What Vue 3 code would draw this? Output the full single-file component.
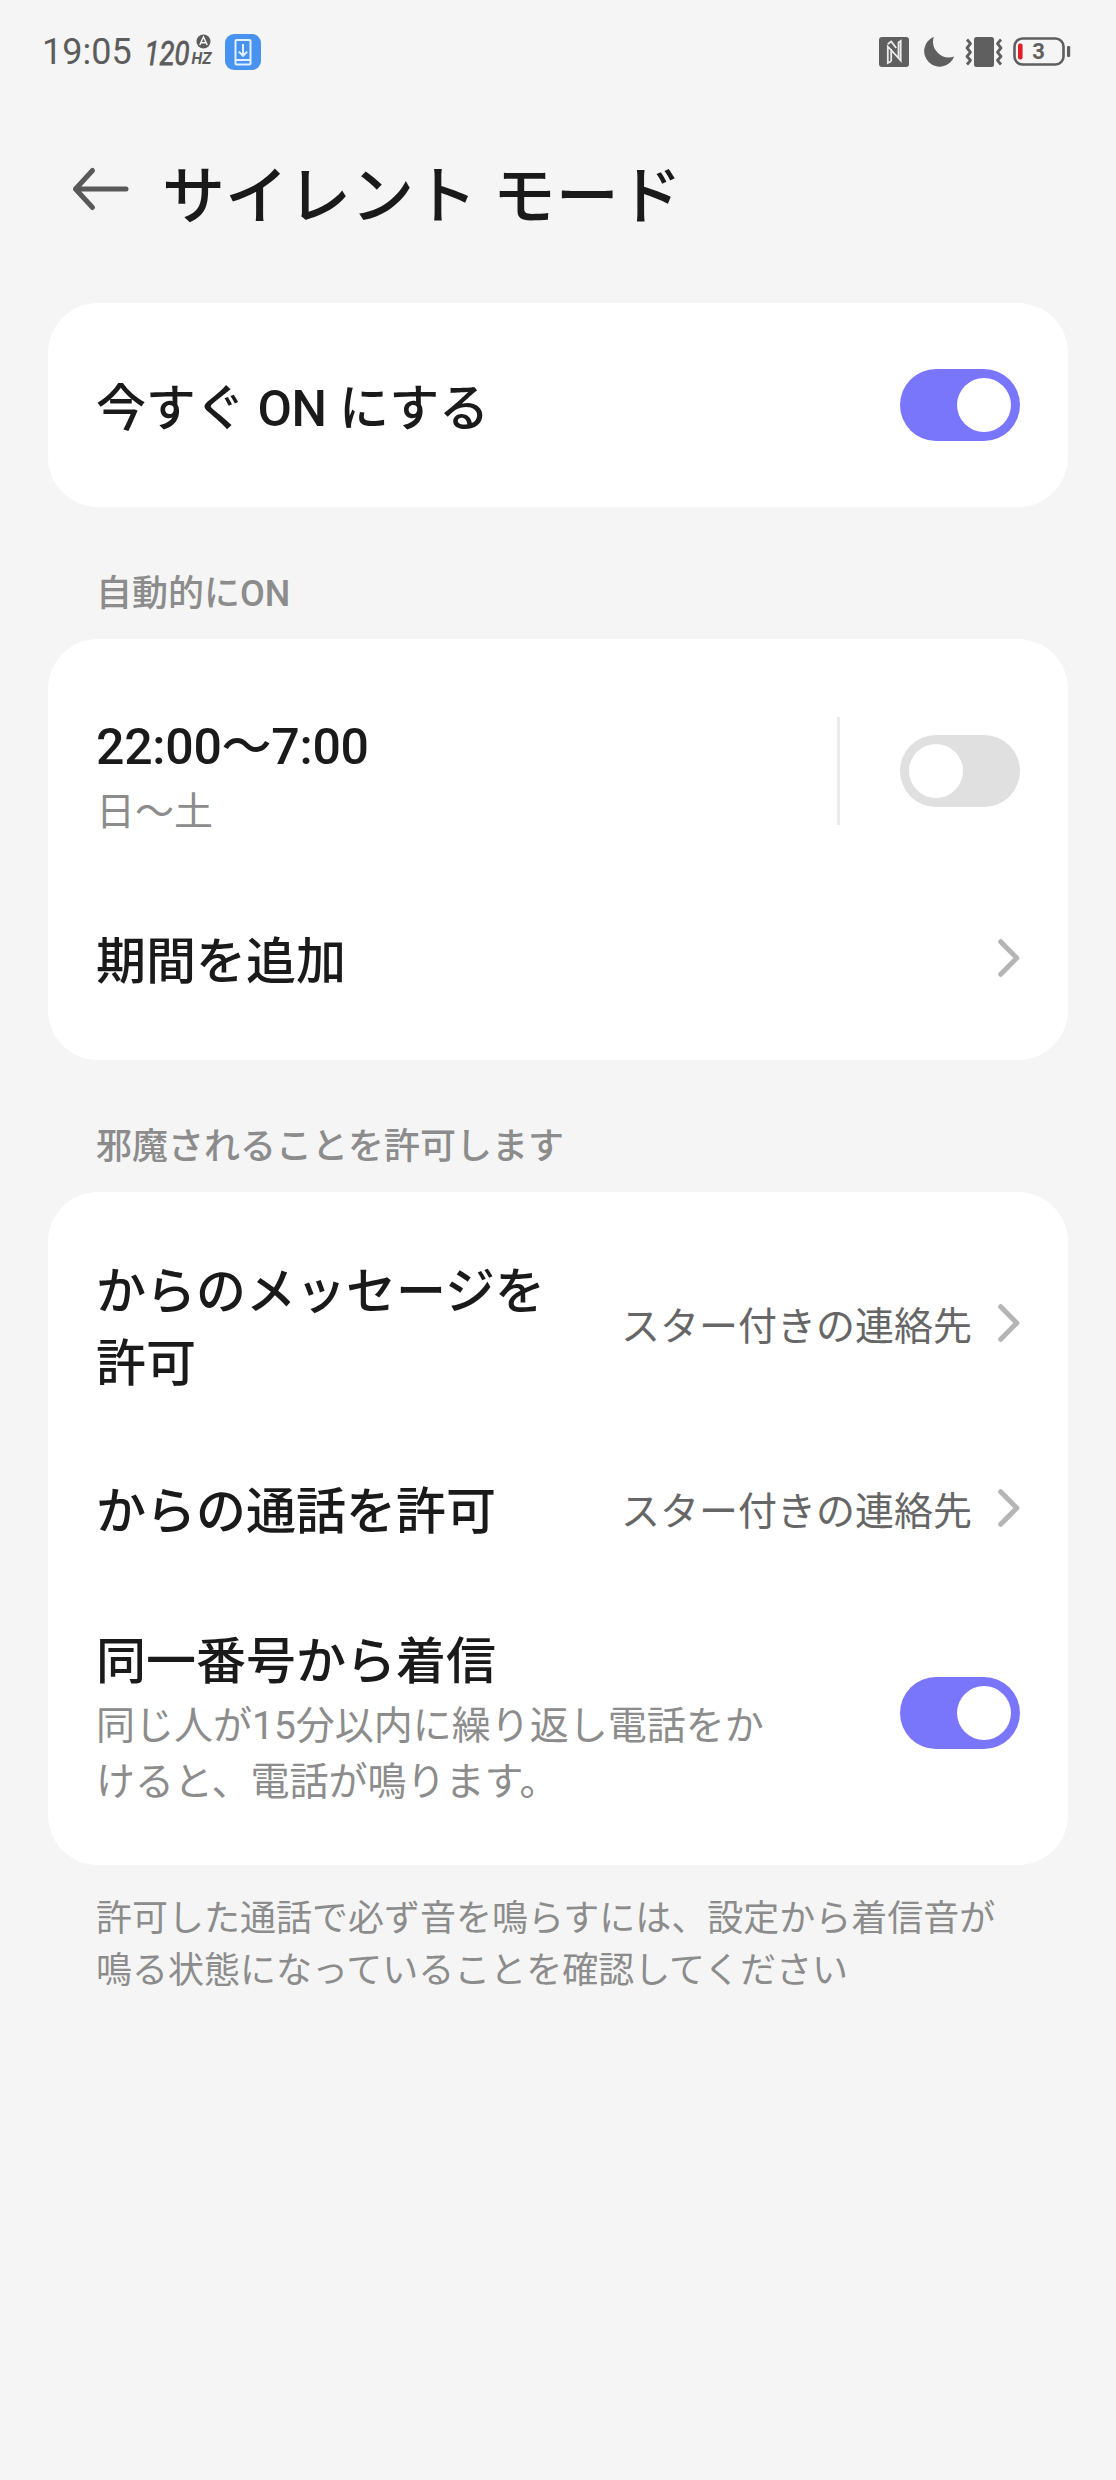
<script setup>
import { ref } from 'vue'

const groups = ref([
  {
    kind: 'single',
    label: '',
    rows: [{ title: '今すぐ ON にする', toggle: true, on: true }],
  },
  {
    kind: 'schedule',
    label: '自動的にON',
    rows: [
      { title: '22:00〜7:00', sub: '日〜土', divider: true, toggle: true, on: false },
      { title: '期間を追加', link: true },
    ],
  },
  {
    kind: 'allow',
    label: '邪魔されることを許可します',
    rows: [
      { title: 'からのメッセージを\n許可', value: 'スター付きの連絡先', link: true },
      { title: 'からの通話を許可', value: 'スター付きの連絡先', link: true },
      {
        title: '同一番号から着信',
        sub: '同じ人が15分以内に繰り返し電話をか\nけると、電話が鳴ります。',
        toggle: true,
        on: true,
      },
    ],
  },
])
</script>

<template>
  <div class="screen">
    <header class="status">
      <div class="status-left">
        <span class="clock">19:05</span>
        <svg class="hz" width="68" height="40" viewBox="0 0 68 40">
          <text class="hz-num" x="-0.5" y="32.5" textLength="45" lengthAdjust="spacingAndGlyphs">120</text>
          <text class="hz-unit" x="46.5" y="32" textLength="20" lengthAdjust="spacingAndGlyphs">HZ</text>
          <circle cx="58.5" cy="9.5" r="7" fill="#5c5c5c" />
          <path d="M54.8 13l3.7-8 3.7 8M56.2 10.8h4.6" fill="none" stroke="#f5f5f5" stroke-width="1.5" />
        </svg>
        <svg class="app-badge" width="36" height="36" viewBox="0 0 36 36">
          <rect width="36" height="36" rx="9" fill="#4892f0" />
          <g fill="none" stroke="#e3f0ff" stroke-width="2">
            <rect x="10.5" y="6" width="15" height="24.5" rx="1" />
            <path d="M10.5 26h15M18 10v11M13.8 17.6L18 21.8l4.2-4.2" />
          </g>
        </svg>
      </div>
      <div class="status-right">
        <svg width="30" height="30" viewBox="0 0 30 30">
          <rect width="30" height="30" rx="3" fill="#5f5f5f" />
          <path d="M12.2 24.2L8.8 26V9.5L19.5 21V5.5L21.7 4v16.5M8.8 7l3.4-2.5L17.2 11M12.2 12v12.2M19.5 21L21.7 23.5V19" fill="none" stroke="#ececec" stroke-width="1.8" />
        </svg>
        <svg class="moon" width="32" height="32" viewBox="0 0 32 32">
          <path d="M10.8 0.8A15.5 15.5 0 1 0 31.2 20.6A16 16 0 0 1 10.8 0.8Z" fill="#5f5f5f" />
        </svg>
        <svg class="vibrate" width="38" height="32" viewBox="0 0 38 32">
          <rect x="9" y="1" width="20" height="30" rx="2.5" fill="#5f5f5f" />
          <path d="M2 3.5l3.5 4.2L2 12l3.5 4.2L2 20.5l3.5 3.8L2 28.5M36 3.5l-3.5 4.2L36 12l-3.5 4.2L36 20.5l-3.5 3.8L36 28.5" fill="none" stroke="#5f5f5f" stroke-width="2.8" stroke-linejoin="round" />
        </svg>
        <svg class="battery" width="58" height="30" viewBox="0 0 58 30">
          <rect x="1.5" y="1.5" width="49" height="26" rx="8" fill="none" stroke="#5f5f5f" stroke-width="2.6" />
          <rect x="54" y="9" width="3.2" height="11" rx="1.2" fill="#5f5f5f" />
          <rect x="5" y="6.5" width="4.6" height="16" rx="2" fill="#e01f28" />
          <text class="level" x="25.5" y="22.3" text-anchor="middle">3</text>
        </svg>
      </div>
    </header>

    <div class="titlebar">
      <svg width="58" height="46" viewBox="0 0 58 46">
        <path d="M21.5 4.5L4.5 23L21.5 41.5M4.5 23H55" fill="none" stroke="#595959" stroke-width="5" stroke-linecap="round" stroke-linejoin="round" />
      </svg>
      <h1>サイレント モード</h1>
    </div>

    <section v-for="g in groups" :key="g.kind">
      <h2 v-if="g.label" class="label">{{ g.label }}</h2>
      <div class="card" :class="g.kind">
        <div v-for="r in g.rows" :key="r.title" class="row">
          <div class="texts">
            <div class="title">{{ r.title }}</div>
            <div v-if="r.sub" class="sub">{{ r.sub }}</div>
          </div>
          <span v-if="r.value" class="value">{{ r.value }}</span>
          <i v-if="r.divider" class="divider"></i>
          <button v-if="r.toggle" class="toggle" :class="{ on: r.on }" @click="r.on = !r.on"><i class="knob"></i></button>
          <svg v-if="r.link" class="chevron" width="22" height="40" viewBox="0 0 22 40">
            <path d="M2.7 3.7L18.8 20L2.7 36.3" fill="none" stroke="#b5b5b5" stroke-width="5" stroke-linecap="round" stroke-linejoin="round" />
          </svg>
        </div>
      </div>
    </section>
    <p class="note">許可した通話で必ず音を鳴らすには、設定から着信音が<br />鳴る状態になっていることを確認してください</p>
  </div>
</template>

<style>
body {
  margin: 0;
  background: #f5f5f5;
}
</style>

<style scoped>
.screen {
  box-sizing: border-box;
  width: 1116px;
  height: 2480px;
  padding: 0 48px;
  background: #f5f5f5;
  color: #1a1a1a;
  font-family: Roboto, "Noto Sans CJK JP", sans-serif;
}
.status {
  display: flex;
  justify-content: space-between;
  height: 104px;
  margin: 0 -3px 0 -6px;
}
.status-left,
.status-right {
  display: flex;
  align-items: center;
  height: 104px;
}
.clock {
  width: 103px;
  color: #5c5c5c;
  font-size: 36px;
  line-height: 104px;
}
.hz {
  flex: none;
  margin-right: 12px;
  overflow: visible;
}
.hz-num {
  font: italic 400 34px Roboto, sans-serif;
  fill: #5c5c5c;
  stroke: #5c5c5c;
  stroke-width: 0.8;
}
.hz-unit {
  font: italic 700 17px Roboto, sans-serif;
  fill: #5c5c5c;
}
.moon {
  margin-left: 14px;
}
.vibrate {
  margin-left: 10px;
}
.battery {
  margin-left: 10px;
}
.level {
  font: 700 22px Roboto, sans-serif;
  fill: #5f5f5f;
}
.titlebar {
  display: flex;
  align-items: center;
  height: 170px;
  margin-bottom: 29px;
  padding-left: 23px;
}
h1 {
  margin: 16px 0 0 33px;
  font-size: 63px;
  font-weight: 500;
  line-height: 92px;
}
.label {
  height: 132px;
  margin: 0;
  padding-left: 48px;
  color: #8c8c8c;
  font-size: 36px;
  font-weight: 500;
  line-height: 174px;
}
.card {
  display: flex;
  flex-direction: column;
  box-sizing: border-box;
  padding: 24px 48px;
  border-radius: 50px;
  background: #fff;
}
.single {
  height: 204px;
}
.schedule {
  height: 421px;
}
.allow {
  height: 673px;
}
.row {
  display: flex;
  flex: none;
  align-items: center;
  height: 156px;
}
.schedule .row:first-child {
  height: 216px;
}
.schedule .row:last-child {
  height: 158px;
}
.allow .row:first-child {
  height: 214px;
}
.allow .row:last-child {
  height: 254px;
}
.texts {
  flex: 1;
  padding-top: 8px;
  white-space: pre;
}
.allow .row:first-child .texts,
.allow .row:last-child .texts {
  padding-top: 10px;
}
.title {
  font-size: 50px;
  font-weight: 500;
  line-height: 72px;
}
.single .title,
.schedule .row:first-child .title {
  letter-spacing: -0.25px;
}
.sub {
  margin-top: 1px;
  color: #8c8c8c;
  font-size: 39px;
  line-height: 56px;
}
.allow .sub {
  margin-top: 0;
}
.value {
  margin-right: 26px;
  padding-top: 7px;
  color: #666;
  font-size: 39px;
  line-height: 56px;
}
.divider {
  width: 3px;
  height: 108px;
  margin-right: 60px;
  background: #ebebeb;
}
.toggle {
  display: flex;
  flex: none;
  box-sizing: border-box;
  width: 120px;
  height: 72px;
  padding: 9px;
  border: 0;
  border-radius: 36px;
  background: #e0e0e0;
}
.toggle.on {
  justify-content: flex-end;
  background: #7a76fc;
}
.knob {
  width: 54px;
  height: 54px;
  border-radius: 50%;
  background: #fff;
}
.chevron {
  flex: none;
}
.note {
  margin: 28px 0 0;
  padding-left: 48px;
  color: #8c8c8c;
  font-size: 36px;
  line-height: 52px;
  white-space: nowrap;
}
</style>
